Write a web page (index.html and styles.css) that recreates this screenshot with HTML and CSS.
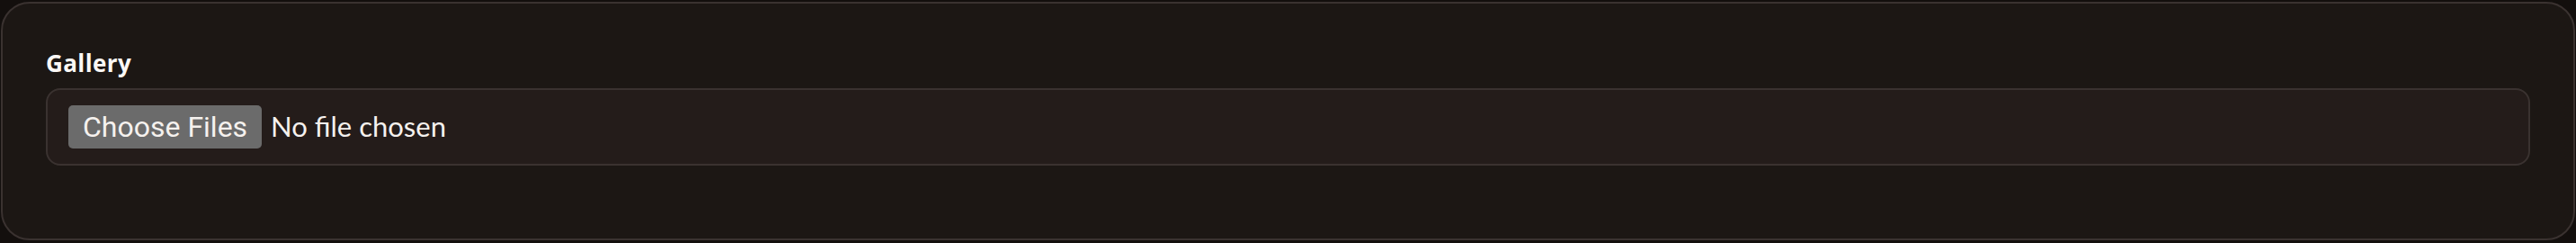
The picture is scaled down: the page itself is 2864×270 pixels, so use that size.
FILE: index.html
```html
<!DOCTYPE html>
<html lang="en">
<head>
    <meta charset="UTF-8">
    <meta name="viewport" content="width=device-width, initial-scale=1.0">
    <title>Gallery upload</title>
    <link rel="stylesheet" href="styles.css">
</head>
<body>
    <div class="card">
        <label class="field-label" for="gallery">Gallery</label>
        <div class="file-box">
            <input type="file" id="gallery" class="file-input" multiple>
        </div>
    </div>
</body>
</html>
```

FILE: styles.css
```css
body {
    margin: 0;
    background-color: #130f0d;
    font-family: Lato, "Noto Sans", sans-serif;
    color: #f5f1ee;
}
.card {
    margin: 2px 1px;
    height: 265px;
    box-sizing: border-box;
    padding: 48px 48px 0 48px;
    border: 2px solid #3a3230;
    border-radius: 32px;
    background-color: #1c1714;
}
.field-label {
    display: block;
    font-family: "Open Sans", sans-serif;
    font-size: 26px;
    font-weight: 700;
    line-height: 36px;
    letter-spacing: 0.4px;
    color: #fbf8f5;
    margin-bottom: 10px;
}
.file-box {
    height: 86px;
    box-sizing: border-box;
    padding: 0 23px;
    border: 2px solid #3a3230;
    border-radius: 16px;
    background-color: #241c1a;
    display: flex;
    align-items: center;
}
.file-input {
    font-family: Lato, "Noto Sans", sans-serif;
    font-size: 31px;
    color: #f5f1ee;
}
.file-input::file-selector-button {
    font-family: Roboto, sans-serif;
    font-size: 32px;
    color: #f5f1ee;
    background-color: #6b6b6b;
    border: none;
    border-radius: 5px;
    height: 48px;
    padding: 0 16px;
    margin-right: 10px;
}
```
